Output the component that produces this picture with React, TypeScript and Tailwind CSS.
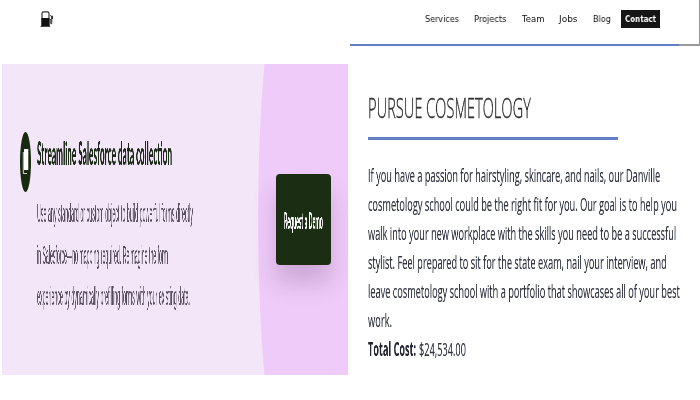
import { useLayoutEffect, useRef, useState } from "react";

type FitProps = { text: string; width: number; className?: string };

// One line of text, condensed or widened horizontally to a given width.
function Fit({ text, width, className = "" }: FitProps) {
  const ref = useRef<HTMLSpanElement>(null);
  const [scale, setScale] = useState(1);
  useLayoutEffect(() => {
    const natural = ref.current?.offsetWidth ?? 0;
    if (natural > 0) setScale(width / natural);
  }, [text, width]);
  return (
    <span className="flex" style={{ width }}>
      <span
        ref={ref}
        className={`block shrink-0 origin-left whitespace-nowrap will-change-transform ${className}`}
        style={{ transform: `scaleX(${scale})` }}
      >
        {text}
      </span>
    </span>
  );
}

const nav = [
  { text: "Services", width: 34 },
  { text: "Projects", width: 33 },
  { text: "Team", width: 22 },
  { text: "Jobs", width: 19 },
  { text: "Blog", width: 18 },
];

const intro = [
  { text: "Use any standard or custom object to build powerful forms directly", width: 156 },
  { text: "in Salesforce—no mapping required. Reimagine the form", width: 131 },
  { text: "experience by dynamically prefilling forms with your existing data.", width: 153 },
];

const course = [
  { text: "If you have a passion for hairstyling, skincare, and nails, our Danville", width: 292 },
  { text: "cosmetology school could be the right fit for you. Our goal is to help you", width: 309 },
  { text: "walk into your new workplace with the skills you need to be a successful", width: 308 },
  { text: "stylist. Feel prepared to sit for the state exam, nail your interview, and", width: 299 },
  { text: "leave cosmetology school with a portfolio that showcases all of your best", width: 312 },
  { text: "work.", width: 24 },
];

function FuelPump() {
  return (
    <svg width="14" height="17" viewBox="0 0 14 17" fill="none">
      <path d="M2 15V2.400C2 1.200 2.600.8 3.400.8h4.200C8.500.8 9 1.300 9 2.400V15" stroke="#333" strokeWidth="1.200" />
      <path d="M1.500 7h7.900V15H1.500z" fill="#111" />
      <path d="M.5 15.400h9.700" stroke="#333" strokeWidth="1" />
      <path d="M9.500 8.500h1.300v4.200h1V7.300M10.200 4.200l2 2.200" stroke="#333" strokeWidth="1" />
      <path d="M11.200 4.800h1.700V8h-1.700z" fill="#222" />
    </svg>
  );
}

export default function App() {
  return (
    <div className="flex h-[400px] w-[700px] overflow-hidden bg-white">
      <div className="flex w-[350px] flex-col">
        <div className="h-16 pl-10 pt-[11px]">
          <FuelPump />
        </div>
        <section className="relative ml-[2px] flex h-[311px] w-[346px] overflow-hidden bg-[#f3e6f9]">
          <svg className="absolute inset-0" width="346" height="311" viewBox="0 0 346 311">
            <path d="M262.500 0C254 90 254 220 262.500 311H346V0z" fill="#efcbf9" />
          </svg>
          <div className="relative flex w-[274px] pl-[18px] pt-[68px]">
            <div className="flex h-[60px] w-[11px] shrink-0 items-center justify-center rounded-[50%] bg-[#17290e]">
              <svg className="shrink-0" width="7" height="30" viewBox="0 0 7 30">
                <path d="M2 2h4.300v21H2z" fill="#fff" />
                <path d="M1.300 5v21.500H5" fill="none" stroke="#fff" strokeWidth=".8" />
              </svg>
            </div>
            <div className="ml-[6px]">
              <h2 className="pt-px">
                <Fit
                  text="Streamline Salesforce data collection"
                  width={135}
                  className="font-['Lato',sans-serif] text-[33px] font-black leading-[38px] text-[#1c2a18]"
                />
              </h2>
              <div className="mt-[22px]">
                {intro.map((line) => (
                  <Fit
                    key={line.text}
                    {...line}
                    className="font-['Liberation_Sans',sans-serif] text-[25px] leading-[41.500px] text-[#544c5c]"
                  />
                ))}
              </div>
            </div>
          </div>
          <button className="relative mt-[110px] flex h-[91px] w-[55px] items-center justify-center rounded-[4px] bg-[#1b2d12] pt-[3px] shadow-[0_18px_24px_rgba(70,30,80,0.2)]">
            <Fit
              text="Request a Demo"
              width={39}
              className="text-left font-['Lato',sans-serif] text-[22px] font-black leading-[30px] text-white"
            />
          </button>
        </section>
      </div>

      <div className="flex w-[350px] flex-col">
        <header className="flex h-11 items-start border-r border-[#999] pl-[75px] pt-[10px]">
          <nav className="flex gap-[15px] pt-[3px]">
            {nav.map((item) => (
              <Fit
                key={item.text}
                {...item}
                className="font-['DejaVu_Sans',sans-serif] text-[8.500px] leading-[12px] text-[#111]"
              />
            ))}
          </nav>
          <div className="ml-[10px] flex h-[18px] w-[39px] items-center justify-center bg-[#151515]">
            <Fit
              text="Contact"
              width={31}
              className="font-['DejaVu_Sans',sans-serif] text-[8.500px] font-bold leading-[12px] text-white"
            />
          </div>
        </header>
        <div className="flex h-[2px]">
          <div className="w-[329px] bg-[#6480c4]" />
          <div className="h-[2px] flex-1 bg-[#999]" />
        </div>
        <main className="pl-[17.500px] pt-[44px] font-['Open_Sans',sans-serif]">
          <h1>
            <Fit
              text="PURSUE COSMETOLOGY"
              width={163}
              className="text-[27px] font-light leading-[36px] text-[#333] [-webkit-text-stroke:0.4px_#333]"
            />
          </h1>
          <div className="mt-[11px] h-[2.500px] w-[250px] bg-[#6480c4]" />
          <div className="mt-[21px]">
            {course.map((line) => (
              <Fit key={line.text} {...line} className="text-[19px] leading-[29px] text-[#30343f] [-webkit-text-stroke:0.2px_#30343f]" />
            ))}
            <div className="flex gap-[3px]">
              <Fit text="Total Cost:" width={48} className="text-[19px] font-bold leading-[29px] text-[#222630]" />
              <Fit text="$24,534.00" width={47} className="text-[19px] leading-[29px] text-[#30343f] [-webkit-text-stroke:0.2px_#30343f]" />
            </div>
          </div>
        </main>
      </div>
    </div>
  );
}
